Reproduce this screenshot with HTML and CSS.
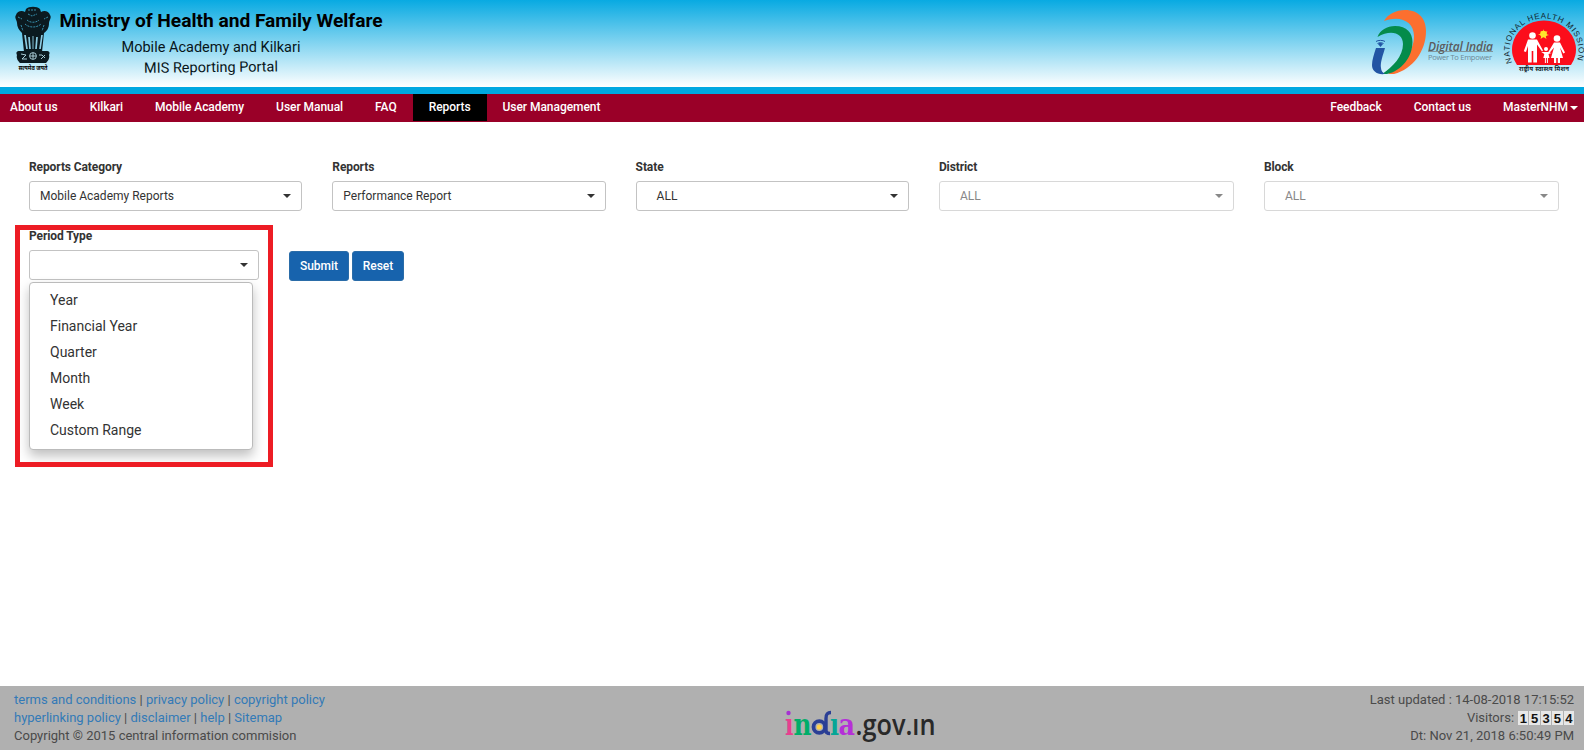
FILE: index.html
```html
<!DOCTYPE html>
<html lang="en">
<head>
<meta charset="utf-8">
<title>MIS Reporting Portal</title>
<link rel="stylesheet" href="styles.css">
</head>
<body>
<header class="banner">
  <svg class="emblem" width="40" height="66" viewBox="0 0 40 66">
    <g fill="#0b1a20">
      <path d="M13 3c3-3 11-3 14 0l1 3c3-2 8-1 9 3 2 3-1 5-1 8 0 5-2 8-5 10l-2 19H11L9 27c-3-3-5-6-5-10 0-3-3-5-1-8 1-4 6-5 9-3z"/>
      <path d="M7 45h26c4 0 4 2 3 4 1 3-1 6-3 8H7c-2-2-4-5-3-8-1-2-1-4 3-4z"/>
    </g>
    <g fill="none" stroke="#3c9dbd" stroke-width=".9">
      <path d="M15 4h9M15 8l4 2 5-2M5 11l4 2M35 11l-4 2M14 14c3 3 9 3 12 0M12 18c4 4 12 4 16 0M8 19l2 6M31 19l-2 6" stroke-dasharray="2 1"/>
      <path d="M12 29l2 14M16 31l1 12M24 31l-1 12M29 29l-2 14" stroke="#8ccde4" stroke-width="1.700"/>
      <path d="M20 30v13" stroke="#8ccde4"/>
      <circle cx="20" cy="50" r="3.400" stroke="#b8dde8"/><path d="M17 50h6M20 47v6M8 48l5 1-4 4h5M26 49h3l3 3M28 53l4-4" stroke="#b8dde8"/>
    </g>
    <text x="20" y="64" text-anchor="middle" class="motto" textLength="29" lengthAdjust="spacingAndGlyphs">सत्यमेव जयते</text>
  </svg>
  <div class="titles">
    <h1>Ministry of Health and Family Welfare</h1>
    <p class="sub1">Mobile Academy and Kilkari</p>
    <p class="sub2">MIS Reporting Portal</p>
  </div>
  <svg class="partners" width="234" height="87" viewBox="0 0 234 87">
    <path fill="#fc6f2f" d="M34 21C38 14 46 10 55 10c14 0 21 9 21 21 0 20-13 38-32 43h-6C52 66 64 52 64 36c0-14-13-21-30-15z"/>
    <path fill="#048b4b" d="M27.500 37C30 30 37 26 45 26c12 0 17.500 7 17.500 16 0 15-11 29-25.500 32h-5C43 67 53 56 53 44c0-11-12-15-25.500-7z"/>
    <path fill="#2255a4" d="M26 48h9c-2 7-5 15-4 20 0 3 2 5 4 6-8 1-13-3-13-9 0-5 2-11 4-17z"/>
    <path fill="#2255a4" d="M28 44l2-1.500 3 1.500-2.500 3z"/>
    <path fill="none" stroke="#2255a4" d="M26 41.500c2-1.500 7-1.500 9 0M27.500 43.500c2-1 4-1 6 0"/>
    <text class="di" x="78" y="51" textLength="65">Digital India</text>
    <path d="M78 51.500h65" stroke="#777" stroke-width=".7"/>
    <text class="pte" x="78" y="59.500" textLength="64">Power To Empower</text>
    <path fill="#fc0d1b" d="M167 65A32 29 0 1 1 221 65z"/>
    <path id="arc" fill="none" d="M162.500 63.500A34.500 32 0 1 1 226 62.500"/>
    <text class="nhm"><textPath href="#arc" textLength="126" startOffset="1">NATIONAL HEALTH MISSION</textPath></text>
    <g fill="#ffe52b"><circle cx="193.500" cy="34" r="3.300"/><path d="M193.500 29l1 3.500 3-1.500-1.500 3 3 1-3.500 1 1 3-3-2-3 2 1-3.500-3.500-1 3.500-1-1-2.500 2.500 1.500z"/></g>
    <g fill="#fff">
      <circle cx="182.500" cy="35.500" r="3.300"/><circle cx="207" cy="38.500" r="3.300"/><circle cx="196" cy="49" r="2"/>
      <path d="M178 39.500h9l6 11-1 1-5-7v18h-3.700V51h-1.600v11.500H178V46l-2 6-2.200-.7zM204 42.500h6l5 10-1.600 1-3.400-6 3 10.500h-3v5h-2.200v-5h-1.600v5H204v-5h-3l3-10.500-5 6-1-1zM194 52h4l3.500 1-3 1 1 4h-1.600v5h-1v-5h-1v5h-1v-5h-1.600l1-4-3-2z"/>
    </g>
    <text class="hin" x="194" y="70.500" text-anchor="middle" textLength="50">राष्ट्रीय स्वास्थ्य मिशन</text>
  </svg>
</header>
<nav class="nav">
  <ul class="menu"><li>About us</li><li>Kilkari</li><li>Mobile Academy</li><li>User Manual</li><li>FAQ</li><li class="active">Reports</li><li>User Management</li></ul>
  <ul class="menu"><li>Feedback</li><li>Contact us</li><li class="user">MasterNHM<i class="caret"></i></li></ul>
</nav>
<main class="main">
  <div class="filters">
    <div class="field"><label>Reports Category</label><div class="select">Mobile Academy Reports<i class="caret"></i></div></div>
    <div class="field"><label>Reports</label><div class="select">Performance Report<i class="caret"></i></div></div>
    <div class="field"><label>State</label><div class="select all">ALL<i class="caret"></i></div></div>
    <div class="field wide"><label>District</label><div class="select all disabled">ALL<i class="caret"></i></div></div>
    <div class="field wide"><label>Block</label><div class="select all disabled">ALL<i class="caret"></i></div></div>
  </div>
  <div class="filters second">
    <div class="field period">
      <label>Period Type</label><div class="select"><i class="caret"></i></div>
      <ul class="options"><li>Year</li><li>Financial Year</li><li>Quarter</li><li>Month</li><li>Week</li><li>Custom Range</li></ul>
      <div class="highlight"></div>
    </div>
    <div class="buttons"><button class="submit">Submit</button><button class="reset">Reset</button></div>
  </div>
</main>
<footer class="footer">
  <div class="links">
    <div><a>terms and conditions</a> | <a>privacy policy</a> | <a>copyright policy</a></div>
    <div><a>hyperlinking policy</a> | <a>disclaimer</a> | <a>help</a> | <a>Sitemap</a></div>
    <div>Copyright © 2015 central information commision</div>
  </div>
  <svg class="india" width="160" height="42" viewBox="0 0 160 42">
    <g class="word">
      <text x="0" y="27" fill="#e8408f" textLength="8.500" lengthAdjust="spacingAndGlyphs">ı</text>
      <text x="8.500" y="27" fill="#00ad69" textLength="18" lengthAdjust="spacingAndGlyphs">n</text>
      <text x="45" y="27" fill="#05a696" textLength="9" lengthAdjust="spacingAndGlyphs">ı</text>
      <text x="53.500" y="27" fill="#b52fd8" textLength="16.500" lengthAdjust="spacingAndGlyphs">a</text>
    </g>
    <text class="gov" x="70.500" y="27" textLength="80" lengthAdjust="spacingAndGlyphs">.gov.ın</text>
    <circle cx="3.500" cy="5" r="2.200" fill="#a632d2"/>
    <circle cx="34.300" cy="19" r="5.800" fill="#b0b0b0" stroke="#2b3f95" stroke-width="3.800"/>
    <circle cx="34.300" cy="19" r="2.600" fill="#ffd04a"/>
    <path d="M46 4.500c-4 0-5 2-5 6v12c0 2 1 3 4 3" fill="none" stroke="#2b3f95" stroke-width="3.400"/>
  </svg>
  <div class="status">
    <div>Last updated : 14-08-2018 17:15:52</div>
    <div class="visitors">Visitors: <span class="counter"><b>1</b><b>5</b><b>3</b><b>5</b><b>4</b></span></div>
    <div>Dt: Nov 21, 2018 6:50:49 PM</div>
  </div>
</footer>
</body>
</html>
```
FILE: styles.css
```css
* { box-sizing: border-box; }
body { margin: 0; height: 750px; display: flex; flex-direction: column; font: 12px/16px Roboto, sans-serif; color: #333; background: #fff; overflow: hidden; }
ul { list-style: none; margin: 0; padding: 0; }
h1, p { margin: 0; }
.banner { height: 94px; flex: none; display: flex; border-bottom: 7px solid #00a8e1; background: linear-gradient(#08aae2, #fff); color: #07151a; }
.emblem { margin: 6px 0 0 13px; flex: none; }
.motto { font: 700 6px "Noto Sans", sans-serif; }
.titles { width: 324px; margin-left: 6px; padding-top: 9px; text-align: center; white-space: nowrap; }
.titles h1 { font-size: 19.200px; line-height: 24px; font-weight: 700; color: #000; letter-spacing: -.02px; }
.titles p { font-size: 14.500px; line-height: 20px; }
.sub1 { margin-top: 4px; padding-right: 20px; }
.titles .sub1 { line-height: 21px; }
.sub2 { padding-right: 20px; transform: rotate(-.6deg); }
.partners { margin-left: auto; flex: none; }
.di { font: italic 600 12px "Open Sans", sans-serif; fill: #5b5c5e; }
.pte { font: 7.500px "Open Sans", sans-serif; fill: #6c8995; }
.nhm { font: 8px "Liberation Sans", sans-serif; fill: #10252e; }
.hin { font: 700 6px "Noto Sans", sans-serif; fill: #10252e; }
.nav { height: 28px; flex: none; background: #9a0028; display: flex; justify-content: space-between; padding: 0 6px 0 0; color: #fff; font-weight: 500; letter-spacing: -.05px; }
.menu { display: flex; }
.menu:first-child { margin-left: -6px; }
.menu li { height: 27px; padding: 5px 16px; }
.menu .active { background: #000; }
.menu .user { padding-right: 0; display: flex; }
.caret { width: 0; height: 0; border: 4px solid transparent; border-top-color: currentColor; border-bottom: 0; }
.user .caret { margin: 7px 0 0 2px; }
.main { flex: 1; padding: 37px 24px 0 29px; }
.filters { display: flex; gap: 30px; }
.second { margin-top: 17px; }
.field { width: 273.300px; position: relative; }
.field label { display: block; height: 22px; font-weight: 700; line-height: 16px; letter-spacing: -.1px; }
.wide { width: 295px; }
.period { width: 230px; }
.select { height: 30px; border: 1px solid #c3c3c3; border-radius: 3px; padding: 0 10px; display: flex; align-items: center; justify-content: space-between; color: #333; }
.select .caret { margin-left: auto; }
.all { padding-left: 20px; }
.disabled { border-color: #d8d8d8; color: #888; }
.options { position: absolute; top: 54px; left: 0; width: 224px; height: 168px; padding: 4px 0; background: #fff; border: 1px solid #bbb; border-radius: 4px; box-shadow: 0 6px 12px rgba(0,0,0,.25); font-size: 14px; line-height: 26px; }
.options li { padding-left: 20px; }
.highlight { position: absolute; top: -3px; left: -14px; width: 258px; height: 242px; border: 5px solid #ed1c24; }
.buttons { display: flex; gap: 3px; margin-top: 23px; }
.buttons button { height: 30px; padding: 0; border: 1px solid #2a6ca8; border-radius: 3px; background: #1763ad; color: #fff; font: 500 12px Roboto, sans-serif; }
.submit { width: 60px; }
.reset { width: 52px; }
.footer { height: 64px; flex: none; background: #b0b0b0; display: flex; justify-content: space-between; padding: 5px 10px 0 14px; font-size: 13px; line-height: 18px; color: #4a4a4a; position: relative; }
.links a { color: #337ab7; }
.india { position: absolute; left: 785px; top: 22px; }
.word { font: 700 30px "DejaVu Serif", serif; }
.gov { font: 600 29px "Open Sans", sans-serif; fill: #292929; }
.status { text-align: right; }
.visitors { display: flex; justify-content: flex-end; gap: 4px; }
.counter { display: flex; gap: 1px; margin-top: 2px; }
.counter b { width: 10.400px; height: 14px; background: #e7e7e7; color: #111; font: 700 13px/15px "Liberation Sans", sans-serif; text-align: center; }
```
